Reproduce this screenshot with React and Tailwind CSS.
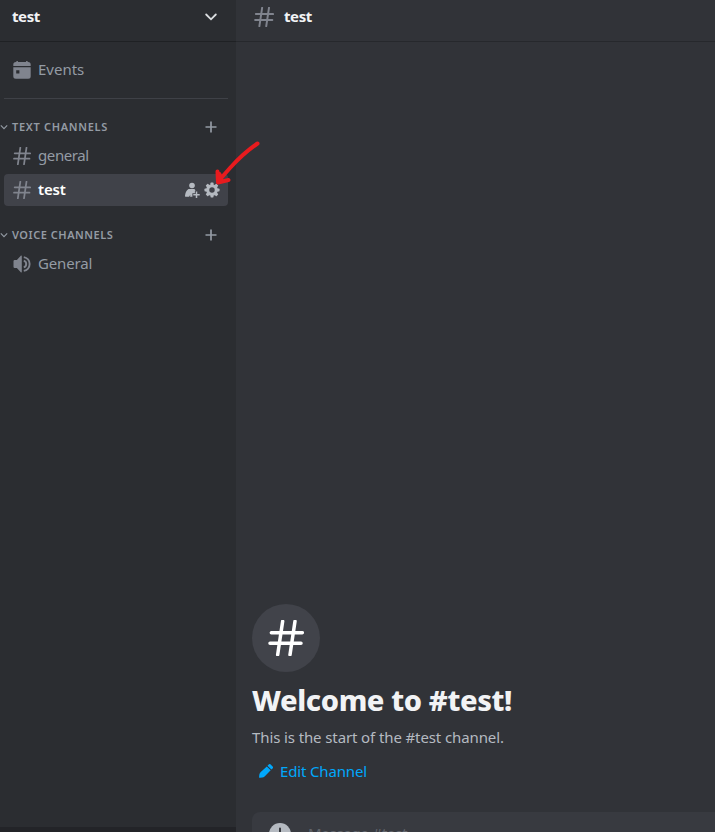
import React from "react";

function Hash({ className }) {
  return (
    <svg viewBox="0 0 108 108" className={className} fill="none" stroke="currentColor" strokeWidth="10.5" strokeLinecap="round">
      <path d="M44 4L29 104M81 4L66 104M10 38H103M6 70H99" />
    </svg>
  );
}

function Plus({ className }) {
  return (
    <svg viewBox="0 0 12 12" className={className} fill="none" stroke="currentColor" strokeWidth="1.7">
      <path d="M6 .5V11.5M.5 6H11.5" />
    </svg>
  );
}

function Calendar() {
  return (
    <svg viewBox="0 0 18 18" className="h-[18px] w-[18px]" fill="currentColor">
      <path d="M3.4 0h1.5v1h8.2V0h1.5v1h.5a2.6 2.6 0 0 1 2.6 2.6V5H.3V3.6A2.6 2.6 0 0 1 2.9 1h.5z" />
      <path fillRule="evenodd" d="M.3 6.3h17.4v8.9a2.5 2.5 0 0 1-2.5 2.5H2.8a2.5 2.5 0 0 1-2.5-2.5zM3.2 9.2v3.2h3.2V9.2z" />
    </svg>
  );
}

function Speaker() {
  return (
    <svg viewBox="0 0 18 18" className="h-[18px] w-[18px]" fill="currentColor">
      <path d="M8.8.9v16.2a.5.5 0 0 1-.8.3L3.9 13H1.7A1.2 1.2 0 0 1 .5 11.8V6.2A1.2 1.2 0 0 1 1.7 5h2.2L8 .6a.5.5 0 0 1 .8.3z" />
      <path d="M10.8 5.6a3.6 3.6 0 0 1 0 6.8M10.8 2.1a7 7 0 0 1 0 13.8" fill="none" stroke="currentColor" strokeWidth="1.9" />
    </svg>
  );
}

function AddPerson() {
  return (
    <svg viewBox="0 0 16 16" className="h-4 w-4" fill="currentColor">
      <circle cx="8" cy="3.5" r="2.8" />
      <path d="M4.5 7.1h5.8c.7.5 1 1.1 1.2 1.7h-.6v2.5H8.4v3.4H6.1l.2-2-1.2 2H1.6c-.5 0-.7-.3-.6-.8.2-2.9 1.4-5.4 3.5-6.8z" />
      <path d="M12.5 9.5v6.4M9.3 12.7h6.4" fill="none" stroke="currentColor" strokeWidth="1.5" />
    </svg>
  );
}

function Gear() {
  return (
    <svg viewBox="0 0 24 24" className="h-4 w-4" fill="currentColor">
      <mask id="gear-hole" maskUnits="userSpaceOnUse" x="0" y="0" width="24" height="24">
        <rect width="24" height="24" fill="white" />
        <circle cx="12" cy="12" r="4.1" fill="black" />
      </mask>
      <g mask="url(#gear-hole)">
        <circle cx="12" cy="12" r="8.8" />
        <rect x="9.7" y=".7" width="4.6" height="22.6" rx="1" />
        <rect x="9.7" y=".7" width="4.6" height="22.6" rx="1" transform="rotate(45 12 12)" />
        <rect x="9.7" y=".7" width="4.6" height="22.6" rx="1" transform="rotate(90 12 12)" />
        <rect x="9.7" y=".7" width="4.6" height="22.6" rx="1" transform="rotate(135 12 12)" />
      </g>
    </svg>
  );
}

function Pencil() {
  return (
    <svg viewBox="0 0 14 14" className="h-3.5 w-3.5" fill="currentColor">
      <path d="M9.7.5a1.4 1.4 0 0 1 2 0l1.9 1.9a1.4 1.4 0 0 1 0 2l-1.2 1.2-3.9-3.9zM7.8 2.4l3.9 3.9-6.1 6.1c-.7.7-1.5 1.1-2.4 1.2l-2.2.2a.8.8 0 0 1-.9-.9l.2-2.2c.1-.9.5-1.7 1.2-2.4z" />
    </svg>
  );
}

function Category({ label, className }) {
  return (
    <div className={"flex h-4 items-center text-[11px] font-semibold text-[#949ba4] " + className}>
      <svg viewBox="0 0 8 8" className="mr-1 h-2 w-2" fill="none" stroke="currentColor" strokeWidth="1.1">
        <path d="M.8 2.4L4 5.6L7.2 2.4" />
      </svg>
      {label}
      <Plus className="mr-[19px] ml-auto h-3 w-3" />
    </div>
  );
}

export default function App() {
  return (
    <div className="flex h-[832px] w-[715px] overflow-hidden bg-[#313338] font-['Noto_Sans',sans-serif]">
      <aside className="flex w-[236px] shrink-0 flex-col bg-[#2b2d31]">
        <header className="flex h-[42px] shrink-0 items-center border-b border-[#1f2124] pr-[19px] pb-2 pl-3 text-[#f2f3f5]">
          <span className="text-[15px] font-bold tracking-[-0.4px]">test</span>
          <svg viewBox="0 0 12 8" className="ml-auto h-2 w-3 text-[#dbdee1]" fill="none" stroke="currentColor" strokeWidth="1.8" strokeLinecap="round">
            <path d="M1.2 1.5L6 6.3L10.8 1.5" />
          </svg>
        </header>
        <div className="mx-1 mt-3 flex h-8 items-center gap-[7px] pl-[9px] text-[15px] text-[#949ba4]">
          <span className="text-[#80848e]"><Calendar /></span>
          <span className="pb-0.5">Events</span>
        </div>
        <div className="mt-3 mr-2 ml-1 h-px shrink-0 bg-[#3f4147]" />
        <Category className="mt-5 tracking-[0.7px]" label="TEXT CHANNELS" />
        <div className="mt-[5px] mr-2 ml-1 flex h-8 items-center gap-[7px] pl-[9px] text-[15px] text-[#949ba4]">
          <Hash className="h-[18px] w-[18px] text-[#80848e]" />
          <span className="pb-0.5 tracking-[-0.4px]">general</span>
        </div>
        <div className="mt-0.5 mr-2 ml-1 flex h-8 items-center rounded bg-[#404249] pr-2 pl-[9px] text-[15px] text-white">
          <Hash className="mr-[7px] h-[18px] w-[18px] text-[#80848e]" />
          <span className="pb-0.5 font-semibold tracking-[-0.2px]">test</span>
          <span className="ml-auto flex items-center gap-1 text-[#b5bac1]">
            <AddPerson />
            <Gear />
          </span>
        </div>
        <Category className="mt-[21px] tracking-[0.53px]" label="VOICE CHANNELS" />
        <div className="mt-[5px] mr-2 ml-1 flex h-8 items-center gap-[7px] pl-[9px] text-[15px] text-[#949ba4]">
          <span className="text-[#80848e]"><Speaker /></span>
          <span className="pb-0.5 tracking-[-0.15px]">General</span>
        </div>
        <div className="mt-auto h-[5px] bg-[#232428]" />
      </aside>

      <main className="flex min-w-0 flex-1 flex-col">
        <header className="flex h-[42px] shrink-0 items-center gap-2.5 border-b border-[#26282c] pb-2 pl-[18px]">
          <Hash className="h-5 w-5 text-[#80848e]" />
          <span className="text-[15px] font-bold tracking-[-0.4px] text-[#f2f3f5]">test</span>
        </header>
        <section className="mt-auto pl-4">
          <div className="flex h-[68px] w-[68px] items-center justify-center rounded-full bg-[#41434a]">
            <Hash className="h-9 w-9 text-white" />
          </div>
          <h1 className="mt-2 text-[29px] leading-10 font-extrabold tracking-[-0.38px] whitespace-nowrap text-[#f2f3f5]">Welcome to #test!</h1>
          <p className="mt-[7px] text-[15px] leading-5 tracking-[-0.11px] whitespace-nowrap text-[#b5bac1]">This is the start of the #test channel.</p>
          <div className="mt-3.5 flex h-5 items-center gap-[7px] pl-[7px] text-[15px] tracking-[-0.15px] text-[#00a8fc]">
            <Pencil />
            <span>Edit Channel</span>
          </div>
        </section>
        <div className="mt-[31px] ml-4 flex h-5 shrink-0 items-start overflow-hidden rounded-tl-lg bg-[#383a40] pl-[17px]">
          <svg viewBox="0 0 22 22" className="mt-[11px] h-[22px] w-[22px] shrink-0">
            <circle cx="11" cy="11" r="11" fill="#b5bac1" />
            <path d="M11 5.5V16.5M5.5 11H16.5" stroke="#383a40" strokeWidth="2" strokeLinecap="round" />
          </svg>
          <span className="mt-[11px] ml-[17px] text-[15px] leading-5 tracking-[-0.25px] text-[#62656c]">Message #test</span>
        </div>
      </main>

      <svg viewBox="0 0 46 44" className="pointer-events-none absolute top-[141px] left-[214px] h-11 w-[46px]" fill="none" stroke="#e81b1e" strokeWidth="4" strokeLinecap="round" strokeLinejoin="round">
        <path d="M43.5 2.5C34 9 25 17 16 27C12 31.5 8 36 4 41M3.5 30.5L4 41.5L14.5 39M5.5 33L6.5 39" />
      </svg>
    </div>
  );
}
